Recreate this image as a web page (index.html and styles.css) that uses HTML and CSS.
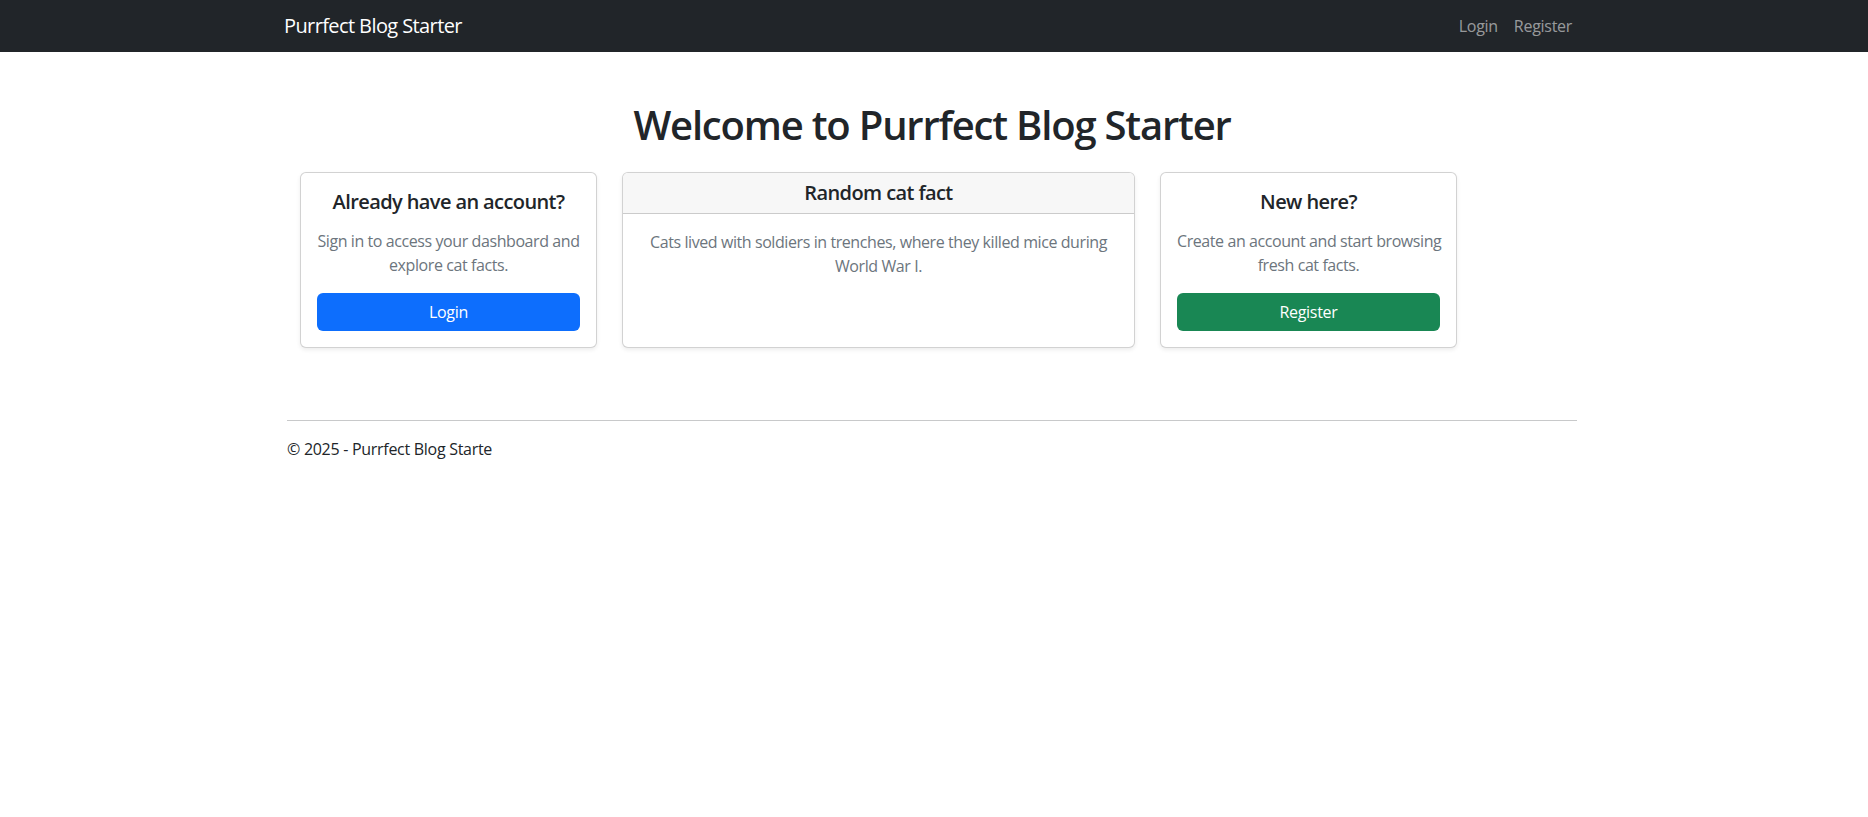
FILE: index.html
```html
<!DOCTYPE html>
<html lang="en">
<head>
<meta charset="utf-8">
<title>Purrfect Blog Starter</title>
<link rel="stylesheet" href="styles.css">
</head>
<body>
<header class="navbar">
  <div class="container nav-inner">
    <a class="brand" href="#">Purrfect Blog Starter</a>
    <nav class="nav-links">
      <a class="nav-link" href="#">Login</a>
      <a class="nav-link" href="#">Register</a>
    </nav>
  </div>
</header>
<main class="container page">
  <h1 class="title">Welcome to Purrfect Blog Starter</h1>
  <div class="cards">
    <section class="card card-side">
      <div class="card-body">
        <h5 class="card-title">Already have an account?</h5>
        <p class="card-text">Sign in to access your dashboard and<br>explore cat facts.</p>
        <a class="btn btn-primary" href="#">Login</a>
      </div>
    </section>
    <section class="card card-fact">
      <div class="card-header"><h5 class="header-title">Random cat fact</h5></div>
      <div class="card-body">
        <p class="card-text">Cats lived with soldiers in trenches, where they killed mice during<br>World War I.</p>
      </div>
    </section>
    <section class="card card-side">
      <div class="card-body">
        <h5 class="card-title">New here?</h5>
        <p class="card-text">Create an account and start browsing<br>fresh cat facts.</p>
        <a class="btn btn-success" href="#">Register</a>
      </div>
    </section>
  </div>
  <footer class="footer">
    <hr class="rule">
    <p class="copy">© 2025 - Purrfect Blog Starte</p>
  </footer>
</main>
</body>
</html>
```

FILE: styles.css
```css
* { box-sizing: border-box; }

body {
  margin: 0;
  font-family: "Open Sans", "Noto Sans", sans-serif;
  font-size: 16px;
  line-height: 1.5;
  letter-spacing: -0.018em;
  color: #212529;
  background: #fff;
}

a { text-decoration: none; }

.container {
  width: 1296px;
  margin-left: calc(50% - 650px);
}

.navbar {
  background: #212529;
  height: 52px;
}

.nav-inner {
  height: 100%;
  display: flex;
  align-items: center;
  justify-content: space-between;
}

.brand {
  color: #fff;
  font-size: 20px;
  line-height: 30px;
  letter-spacing: -0.03em;
}

.nav-links {
  display: flex;
}

.nav-link {
  color: rgba(255, 255, 255, 0.55);
  padding: 0 8px;
  font-size: 16px;
}

.page {
  padding: 0 3px;
}

.title {
  margin: 49px 0 23px;
  text-align: center;
  font-size: 40px;
  font-weight: 600;
  line-height: 1.2;
  letter-spacing: -0.03em;
}

.cards {
  display: flex;
  gap: 25px;
  margin-left: 13px;
  align-items: stretch;
}

.card {
  border: 1px solid rgba(0, 0, 0, 0.175);
  border-radius: 6px;
  box-shadow: 0 2px 4px rgba(0, 0, 0, 0.075);
  background: #fff;
  display: flex;
  flex-direction: column;
  overflow: hidden;
}

.card-side { width: 297px; }
.card-fact { width: 513px; }

.card-header {
  background: #f7f7f7;
  border-bottom: 1px solid rgba(0, 0, 0, 0.175);
  padding: 8px 16px;
  text-align: center;
}

.header-title {
  margin: 0;
  font-size: 20px;
  font-weight: 600;
  line-height: 1.2;
  letter-spacing: -0.03em;
}

.card-body {
  padding: 16px;
  text-align: center;
  flex: 1;
}

.card-title {
  margin: 1px 0 15px;
  font-size: 20px;
  font-weight: 600;
  line-height: 1.2;
  letter-spacing: -0.03em;
}

.card-text {
  margin: 0 0 16px;
  color: #6c757d;
  white-space: nowrap;
  letter-spacing: -0.026em;
}

.card-fact .card-text { margin: 0; }

.btn {
  display: block;
  height: 38px;
  line-height: 38px;
  border-radius: 6px;
  color: #fff;
  text-align: center;
  font-size: 16px;
}

.btn-primary { background: #0d6efd; }
.btn-success { background: #198754; }

.footer {
  margin-top: 72px;
}

.rule {
  margin: 0 0 16px;
  border: 0;
  border-top: 1px solid #c8c9ca;
}

.copy {
  margin: 0;
}
```
